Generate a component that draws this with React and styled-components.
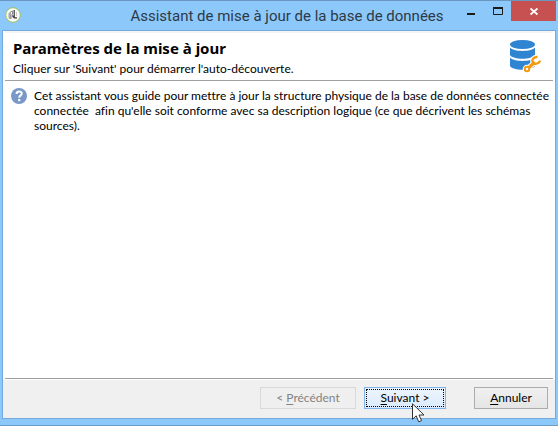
import React from "react";
import styled, { createGlobalStyle, css } from "styled-components";

const GlobalStyle = createGlobalStyle`
  * { box-sizing: border-box; }
  body {
    margin: 0;
    font-family: Lato, "Noto Sans", sans-serif;
    font-size: 12px;
    font-variant-ligatures: none;
    color: #000;
  }
`;

const Window = styled.div`
  display: flex;
  flex-direction: column;
  min-height: 100vh;
  padding: 0 2px 6px;
  background: #8dc8fb;
  border-top: 1px solid #6a97bf;
  border-bottom: 1px solid #6a9cc8;
`;

const TitleBar = styled.header`
  display: grid;
  grid-template-columns: 102px 1fr 86px;
  align-items: start;
  height: 29px;
`;

const AppIcon = styled.svg`
  width: 16px;
  height: 16px;
  margin: 6px 0 0 3px;
`;

const WindowTitle = styled.div`
  padding-top: 5px;
  font-family: Roboto, sans-serif;
  font-size: 15px;
  line-height: 20px;
  color: #2c3a47;
  text-align: center;
  white-space: nowrap;
`;

const Controls = styled.div`
  display: flex;
  justify-content: flex-end;
`;

const ControlButton = styled.button`
  width: ${(p) => (p.$close ? 45 : 27)}px;
  height: 20px;
  flex: none;
  padding: 0;
  border: 0;
  background: ${(p) => (p.$close ? "#c75050" : "transparent")};
  svg { display: block; }
`;

const Client = styled.main`
  display: flex;
  flex-direction: column;
  flex: 1;
  background: #fff;
  border: 1px solid #74a9db;
`;

const Header = styled.section`
  display: flex;
  justify-content: space-between;
  margin: 0 2px;
  padding: 7px 12px 0 8px;
  height: 50px;
  border-top: 2px solid #f4f4f4;
  border-bottom: 1px solid #a0a0a0;
`;

const Heading = styled.h1`
  margin: 0;
  font-family: "Noto Sans", sans-serif;
  font-size: 15px;
  line-height: 16px;
  font-weight: 700;
`;

const Subtitle = styled.p`
  margin: 5px 0 0;
  line-height: 16px;
  white-space: nowrap;
`;

const DatabaseIcon = styled.svg`
  width: 32px;
  height: 34px;
  flex: none;
`;

const Content = styled.section`
  display: flex;
  flex: 1;
  align-items: flex-start;
  gap: 7px;
  margin: 0 2px;
  padding: 7px 4px 0 6px;
  border-bottom: 1px solid #a0a0a0;
`;

const HelpIcon = styled.svg`
  width: 16px;
  height: 16px;
  flex: none;
`;

const Message = styled.p`
  margin: 0;
  line-height: 15px;
  white-space: pre;
`;

const Footer = styled.footer`
  display: flex;
  justify-content: flex-end;
  gap: 8px;
  padding: 8px 7px 9px;
  background: #f0f0f0;
  box-shadow: inset 0 1px #fff;
`;

const DialogButton = styled.button`
  display: block;
  width: ${(p) => p.$width}px;
  height: 22px;
  padding: 0;
  border: 1px solid #acacac;
  background: linear-gradient(#f0f0f0, #e5e5e5);
  color: #000;
  font: inherit;
  font-variant-ligatures: none;
  line-height: 18px;
  u { text-underline-offset: 2px; }
  ${(p) => p.$focused && css`
    border-color: #7eb4ea;
    background: linear-gradient(#ecf4fc, #dcecfc);
    outline: 1px dotted #000;
    outline-offset: -3px;
  `}
  &:disabled {
    border-color: #d9d9d9;
    background: #efefef;
    color: #838383;
  }
`;

const ActionSlot = styled.div`
  position: relative;
  margin-right: 20px;
`;

const Pointer = styled.svg`
  position: absolute;
  left: 48px;
  top: 16px;
  width: 13px;
  height: 20px;
  pointer-events: none;
`;

export default function App() {
  return (
    <>
      <GlobalStyle />
      <Window>
        <TitleBar>
          <AppIcon viewBox="0 0 16 16" aria-hidden="true">
            <circle cx="8" cy="8" r="7.3" fill="#fafafa" stroke="#9bc455" />
            <path d="M3.5 6 6 4.500v7.500l-2.500-.5z" fill="#aaa" />
            <path d="M5.500 5 7.500 4v3L6 8.500V12" fill="none" stroke="#888" />
            <path d="M9.200 3v7.500M7.300 8.500l2 2.300H12" fill="none" stroke="#3a3a3a" strokeWidth="1.2" />
            <path d="M11.500 5v4" stroke="#ccc" />
          </AppIcon>
          <WindowTitle>Assistant de mise à jour de la base de données</WindowTitle>
          <Controls>
            <ControlButton aria-label="Réduire">
              <svg width="27" height="20"><path d="M10 13h8" stroke="#1b1b1b" strokeWidth="2" /></svg>
            </ControlButton>
            <ControlButton aria-label="Agrandir">
              <svg width="27" height="20">
                <path d="M9.500 7v6.500h9V7" fill="none" stroke="#1b1b1b" />
                <path d="M9 7h10" stroke="#1b1b1b" strokeWidth="2" />
              </svg>
            </ControlButton>
            <ControlButton $close aria-label="Fermer">
              <svg width="45" height="20"><path d="m19.500 7.500 7 6m0-6-7 6" stroke="#fff" strokeWidth="1.700" /></svg>
            </ControlButton>
          </Controls>
        </TitleBar>
        <Client>
          <Header>
            <div>
              <Heading>Paramètres de la mise à jour</Heading>
              <Subtitle>Cliquer sur 'Suivant' pour démarrer l'auto-découverte.</Subtitle>
            </div>
            <DatabaseIcon viewBox="0 0 32 34" aria-hidden="true">
              <g fill="#3085d3">
                <ellipse cx="13.500" cy="4.500" rx="12.500" ry="4.500" />
                <path d="M1 7.500c3 4.500 22 4.500 25 0v7.500c-3 5-22 5-25 0z" />
                <path d="M1 17.500c3 4.500 22 4.500 25 0v8.500c-3 5-22 5-25 0z" />
              </g>
              <g fill="none" strokeLinecap="round">
                <g stroke="#fff">
                  <path d="m18.500 28.700 7-6.200" strokeWidth="5.500" />
                  <circle cx="18" cy="29" r="2.300" strokeWidth="4" />
                  <path d="M27.500 17c-3 .3-4.800 2.500-3.800 5s5 2.800 7-.5" strokeWidth="4.500" />
                </g>
                <g stroke="#f39a12">
                  <path d="m20 27.500 4.800-4.500" strokeWidth="3.200" />
                  <circle cx="18" cy="29" r="2.200" fill="#fff" strokeWidth="2" />
                  <path d="M27.500 17c-3 .3-4.800 2.500-3.800 5s5 2.800 7-.5" strokeWidth="2.400" />
                </g>
              </g>
            </DatabaseIcon>
          </Header>
          <Content>
            <HelpIcon viewBox="0 0 16 16" aria-hidden="true">
              <circle cx="8" cy="8" r="8" fill="#7898c8" />
              <path d="M5.500 5.900C5.500 2.500 10.800 2.700 10.800 5.600c0 1.800-2.600 1.800-2.600 4.200" fill="none" stroke="#fff" strokeWidth="2" />
              <path d="M7.100 11h2.200v2.200H7.100z" fill="#fff" />
            </HelpIcon>
            <Message>
              {"Cet assistant vous guide pour mettre à jour la structure physique de la base de données connectée\nconnectée  afin qu'elle soit conforme avec sa description logique (ce que décrivent les schémas\nsources)."}
            </Message>
          </Content>
          <Footer>
            <DialogButton $width={96} disabled>&lt; <u>P</u>récédent</DialogButton>
            <ActionSlot>
              <DialogButton $width={82} $focused><u>S</u>uivant &gt;</DialogButton>
              <Pointer viewBox="0 0 13 20" aria-hidden="true">
                <path d="M.5.800v15.500l3.700-3.500 2.500 6 2.800-1.200-2.500-5.600h5z" fill="#fff" stroke="#333" />
              </Pointer>
            </ActionSlot>
            <DialogButton $width={74}><u>A</u>nnuler</DialogButton>
          </Footer>
        </Client>
      </Window>
    </>
  );
}
